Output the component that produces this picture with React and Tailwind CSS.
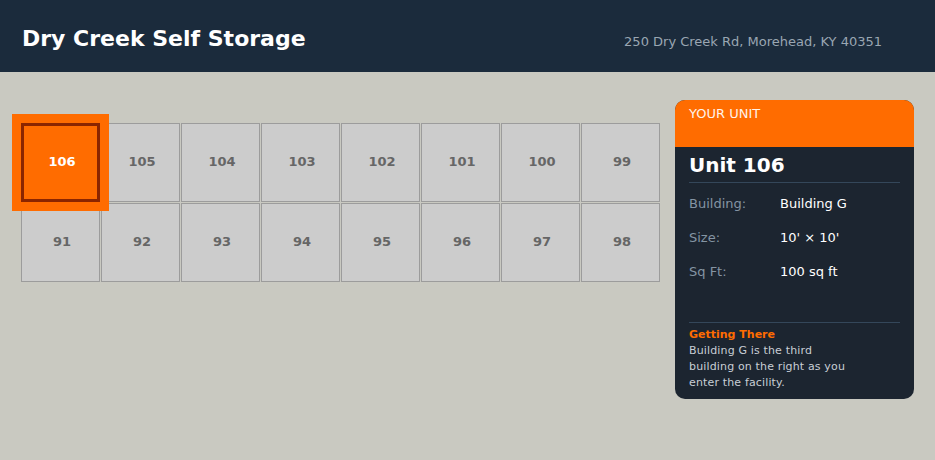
import React from "react";

// Plan du batiment G : rangee du haut 106 -> 99, rangee du bas 91 -> 98
const ROW_TOP = [106, 105, 104, 103, 102, 101, 100, 99];
const ROW_BOTTOM = [91, 92, 93, 94, 95, 96, 97, 98];
const SELECTED = 106;

const DETAILS = [
  { label: "Building:", value: "Building G" },
  { label: "Size:", value: "10' × 10'" },
  { label: "Sq Ft:", value: "100 sq ft" },
];

function Cell({ num }) {
  if (num === SELECTED) {
    return (
      <div className="relative z-10 w-[79px] h-[79px] flex items-center justify-center pl-[3px] pb-[2px] bg-[#ff6c00] border-[3px] border-[#8b2500] shadow-[0_0_0_9px_#ff6c00] text-white text-[13px] font-bold">
        {num}
      </div>
    );
  }
  return (
    <div className="w-[79px] h-[79px] flex items-center justify-center pl-[3px] pb-[2px] bg-[#cccccc] border border-[#9c9c9c] text-[#666666] text-[13px] font-bold">
      {num}
    </div>
  );
}

export default function App() {
  return (
    <div className="min-h-[460px] bg-[#c9c9c1] font-['DejaVu_Sans',sans-serif]">
      {/* En-tete */}
      <header className="h-[72px] bg-[#1b2b3c] flex items-baseline justify-between pl-[22px] pr-[53px] pt-[24px]">
        <h1 className="text-[22px] leading-[30px] font-bold text-white">Dry Creek Self Storage</h1>
        <div className="text-[13px] text-[#9aa6b2]">250 Dry Creek Rd, Morehead, KY 40351</div>
      </header>

      <main className="flex gap-[15px] px-[21px] pt-[28px]">
        {/* Plan des box */}
        <div className="mt-[23px] flex flex-col gap-px">
          <div className="flex gap-px">
            {ROW_TOP.map((n) => <Cell key={n} num={n} />)}
          </div>
          <div className="flex gap-px">
            {ROW_BOTTOM.map((n) => <Cell key={n} num={n} />)}
          </div>
        </div>

        {/* Fiche du box */}
        <aside className="w-[239px] rounded-[10px] overflow-hidden bg-[#1c2530]">
          <div className="h-[47px] bg-[#ff6c00] px-[14px] pt-[5px] text-[13px] leading-[18px] text-[#fff3ea]">
            YOUR UNIT
          </div>
          <div className="px-[14px] pb-[8px]">
            <div className="pt-[6px] pb-[5px] border-b border-[#34475a] text-[20px] leading-[24px] font-bold text-white">
              Unit 106
            </div>
            <div className="mt-[4px]">
              {DETAILS.map((d) => (
                <div key={d.label} className="flex py-[8px] text-[13px] leading-[18px]">
                  <span className="w-[91px] text-[#8494a3]">{d.label}</span>
                  <span className="text-white">{d.value}</span>
                </div>
              ))}
            </div>
            <div className="mt-[33px] border-t border-[#34475a] pt-[4px] text-[11px] leading-[16px]">
              <div className="font-bold text-[#ff6c00]">Getting There</div>
              <p className="max-w-[162px] tracking-[0.15px] text-[#c8ced5]">
                Building G is the third building on the right as you enter the facility.
              </p>
            </div>
          </div>
        </aside>
      </main>
    </div>
  );
}
